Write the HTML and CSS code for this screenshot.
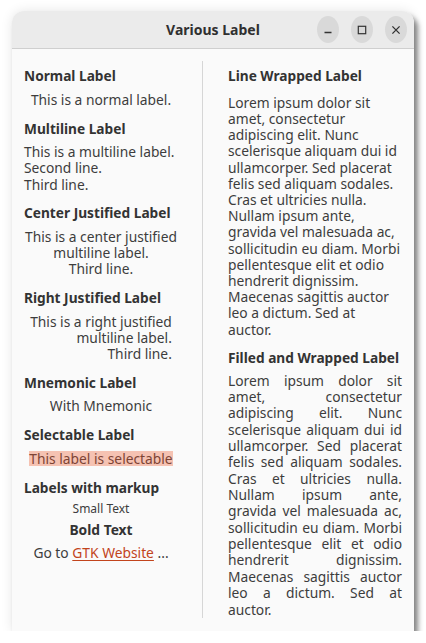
FILE: index.html
```html
<!DOCTYPE html>
<html>
<head>
<meta charset="utf-8">
<link rel="stylesheet" href="styles.css">
</head>
<body>
<div class="window">
  <header class="headerbar">
    <div></div>
    <div class="title">Various Label</div>
    <div class="controls">
      <span class="wbtn"><svg width="12" height="12" viewBox="0 0 12 12"><path d="M2.5 8.5h7" stroke="#333" stroke-width="1.3" fill="none"/></svg></span>
      <span class="wbtn"><svg width="12" height="12" viewBox="0 0 12 12"><rect x="2.3" y="2.3" width="7.4" height="7.4" stroke="#333" stroke-width="1.2" fill="none"/></svg></span>
      <span class="wbtn"><svg width="12" height="12" viewBox="0 0 12 12"><path d="M2.4 2.4l7.2 7.2M9.6 2.4l-7.2 7.2" stroke="#333" stroke-width="1.3" fill="none"/></svg></span>
    </div>
  </header>
  <main class="content">
    <section class="col left">
      <div class="group">
        <div class="head">Normal Label</div>
        <div class="lbl center">This is a normal label.</div>
      </div>
      <div class="group">
        <div class="head">Multiline Label</div>
        <div class="lbl">This is a multiline label.<br>Second line.<br>Third line.</div>
      </div>
      <div class="group">
        <div class="head">Center Justified Label</div>
        <div class="lbl center">This is a center justified<br>multiline label.<br>Third line.</div>
      </div>
      <div class="group">
        <div class="head">Right Justified Label</div>
        <div class="lbl rightbox"><span class="right">This is a right justified<br>multiline label.<br>Third line.</span></div>
      </div>
      <div class="group">
        <div class="head">Mnemonic Label</div>
        <div class="lbl center">With Mnemonic</div>
      </div>
      <div class="group">
        <div class="head">Selectable Label</div>
        <div class="lbl center"><span class="selected">This label is selectable</span></div>
      </div>
      <div class="group markup">
        <div class="head">Labels with markup</div>
        <div class="lbl center small">Small Text</div>
        <div class="lbl center bold">Bold Text</div>
        <div class="lbl center goto">Go to <a class="link" href="#">GTK Website</a> ...</div>
      </div>
    </section>
    <div class="vsep"></div>
    <section class="col right-col">
      <div class="group first">
        <div class="head">Line Wrapped Label</div>
        <div class="lbl wrapped">Lorem ipsum dolor sit<br>amet, consectetur<br>adipiscing elit. Nunc<br>scelerisque aliquam dui id<br>ullamcorper. Sed placerat<br>felis sed aliquam sodales.<br>Cras et ultricies nulla.<br>Nullam ipsum ante,<br>gravida vel malesuada ac,<br>sollicitudin eu diam. Morbi<br>pellentesque elit et odio<br>hendrerit dignissim.<br>Maecenas sagittis auctor<br>leo a dictum. Sed at<br>auctor.</div>
      </div>
      <div class="group second">
        <div class="head">Filled and Wrapped Label</div>
        <div class="lbl filled">
          <span class="jl">Lorem ipsum dolor sit</span>
          <span class="jl">amet, consectetur</span>
          <span class="jl">adipiscing elit. Nunc</span>
          <span class="jl">scelerisque aliquam dui id</span>
          <span class="jl">ullamcorper. Sed placerat</span>
          <span class="jl">felis sed aliquam sodales.</span>
          <span class="jl">Cras et ultricies nulla.</span>
          <span class="jl">Nullam ipsum ante,</span>
          <span class="jl">gravida vel malesuada ac,</span>
          <span class="jl">sollicitudin eu diam. Morbi</span>
          <span class="jl">pellentesque elit et odio</span>
          <span class="jl">hendrerit dignissim.</span>
          <span class="jl">Maecenas sagittis auctor</span>
          <span class="jl">leo a dictum. Sed at</span>
          <span class="jl last">auctor.</span>
        </div>
      </div>
    </section>
  </main>
</div>
</body>
</html>
```
FILE: styles.css
```css
html, body {
  margin: 0;
  padding: 0;
  background: #ffffff;
}
body {
  font-family: "Noto Sans", "DejaVu Sans", sans-serif;
  color: #3d3d3d;
}
.window {
  margin: 11px 0 0 12px;
  width: 402px;
  height: 620px;
  border-radius: 12px 12px 0 0;
  overflow: hidden;
  display: flex;
  flex-direction: column;
  box-shadow: 4px 5px 5px rgba(0, 0, 0, 0.45), 0 0 12px rgba(0, 0, 0, 0.10);
  background: #fafafa;
}
.headerbar {
  height: 37px;
  flex: none;
  background: #ebebeb;
  border-bottom: 1px solid #cfcfcf;
  display: grid;
  grid-template-columns: 1fr auto 1fr;
  align-items: center;
}
.title {
  font-weight: bold;
  font-size: 14px;
  color: #303030;
}
.controls {
  display: flex;
  justify-content: flex-end;
  gap: 12px;
  padding-right: 7px;
}
.wbtn {
  width: 22px;
  height: 27px;
  border-radius: 50%;
  background: #d9d9d9;
  display: flex;
  align-items: center;
  justify-content: center;
}
.content {
  flex: 1;
  display: flex;
  padding: 12px 12px 13px 12px;
  background: #fafafa;
}
.col {
  display: flex;
  flex-direction: column;
  gap: 11.6px;
  padding-top: 6.3px;
}
.left {
  width: 154px;
  margin-right: 24px;
}
.vsep {
  width: 1px;
  background: #d6d6d6;
  margin-right: 25px;
}
.right-col {
  width: 174px;
}
.group {
  display: flex;
  flex-direction: column;
  gap: 6.4px;
}
.head {
  font-weight: bold;
  font-size: 13.7px;
  line-height: 17px;
  color: #333333;
  white-space: nowrap;
  margin-bottom: 1.2px;
}
.lbl {
  font-size: 13.8px;
  line-height: 16.18px;
  white-space: nowrap;
}
.center {
  text-align: center;
}
.rightbox {
  text-align: center;
}
.right {
  display: inline-block;
  text-align: right;
}
.selected {
  background: #f5c2b2;
  color: #7d4435;
  line-height: 15.3px;
  display: inline-block;
}
.markup {
  gap: 5.45px;
}
.small {
  font-size: 12px;
  line-height: 14px;
}
.bold {
  font-weight: bold;
  color: #333333;
}
.goto {
  margin-top: 1.5px;
}
.link {
  color: #c2441c;
  text-decoration: underline;
  text-underline-offset: 2px;
}
.right-col .first {
  gap: 9.45px;
}
.right-col .second {
  gap: 5px;
}
.filled {
  display: flex;
  flex-direction: column;
  line-height: 16.36px;
}
.jl {
  display: block;
  text-align: justify;
  text-align-last: justify;
}
.jl.last {
  text-align-last: left;
}
```
